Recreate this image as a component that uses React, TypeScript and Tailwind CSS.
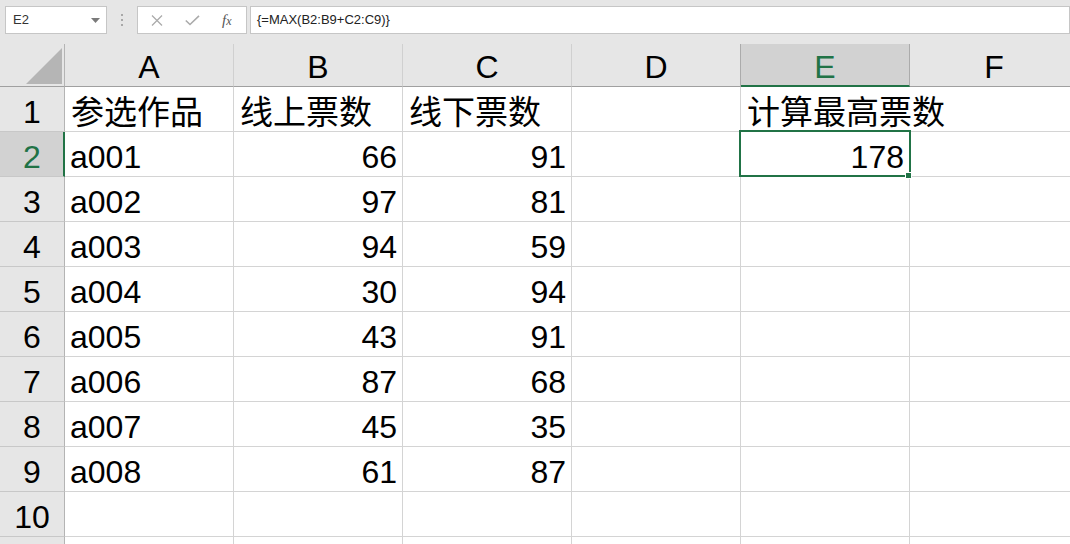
import React from 'react';

const cols = ['A', 'B', 'C', 'D', 'E', 'F'];

const votes: [string, number, number][] = [
  ['a001', 66, 91],
  ['a002', 97, 81],
  ['a003', 94, 59],
  ['a004', 30, 94],
  ['a005', 43, 91],
  ['a006', 87, 68],
  ['a007', 45, 35],
  ['a008', 61, 87],
];

const font = { fontFamily: '"Liberation Sans", "Noto Sans CJK SC", sans-serif' };

const Cell: React.FC<{ right?: boolean; noRightLine?: boolean; children?: React.ReactNode }> = ({
  right,
  noRightLine,
  children,
}) => (
  <div
    className={
      'w-[169px] h-[45px] shrink-0 border-b px-[5px] leading-[51px] whitespace-nowrap text-[32px] text-black ' +
      (noRightLine ? 'border-r border-b-[#d4d4d4] border-r-white ' : 'border-r border-[#d4d4d4] ') +
      (right ? 'text-right' : 'text-left')
    }
  >
    {children}
  </div>
);

const Cjk: React.FC<{ children: React.ReactNode }> = ({ children }) => (
  <span className="text-[33px] pl-[1px]">{children}</span>
);

function FormulaBar() {
  return (
    <div className="h-[44px] bg-[#e6e6e6] flex items-start pt-[6px]">
      <div className="ml-[5px] w-[102px] h-[28px] shrink-0 bg-white border border-[#c6c6c6] flex items-center justify-between pl-[7px] pr-[6px]">
        <span className="text-[13px] text-[#333]">E2</span>
        <svg width="9" height="5" viewBox="0 0 9 5">
          <path d="M0 0 L9 0 L4.5 5 Z" fill="#7a7a7a" />
        </svg>
      </div>
      <div className="w-[30px] h-[28px] shrink-0 flex flex-col items-center justify-center gap-[3px] pr-[1px]">
        <div className="w-[2px] h-[2px] bg-[#a8a8a8]" />
        <div className="w-[2px] h-[2px] bg-[#a8a8a8]" />
        <div className="w-[2px] h-[2px] bg-[#a8a8a8]" />
      </div>
      <div className="w-[110px] h-[28px] shrink-0 bg-white border border-[#c6c6c6] flex items-center pl-[13px]">
        <svg width="12" height="11" viewBox="0 0 12 11">
          <path d="M1 0.5 L11 10.5 M11 0.5 L1 10.5" stroke="#ababab" strokeWidth="1.3" />
        </svg>
        <svg width="15" height="11" viewBox="0 0 15 11" className="ml-[22px]">
          <path d="M0.8 5.5 L5 9.5 L14 0.8" stroke="#ababab" strokeWidth="1.6" fill="none" />
        </svg>
        <span
          className="ml-[22px] text-[15px] italic text-[#555] leading-none"
          style={{ fontFamily: '"Liberation Serif", serif' }}
        >
          f<span className="text-[12px]">x</span>
        </span>
      </div>
      <div className="ml-[3px] flex-1 h-[28px] bg-white border border-[#c6c6c6] flex items-center pl-[6px]">
        <span className="text-[13px] text-[#222]">{'{=MAX(B2:B9+C2:C9)}'}</span>
      </div>
    </div>
  );
}

function ColumnHeaders() {
  return (
    <div className="flex h-[43px]">
      <div className="w-[65px] h-[43px] shrink-0 border-r border-b border-r-[#b4b4b4] border-b-[#a0a0a0] bg-[#e6e6e6] flex items-end justify-end pr-[2px] pb-[2px]">
        <svg width="36" height="36" viewBox="0 0 36 36">
          <path d="M0 36 L36 36 L36 0 Z" fill="#b5b5b5" />
        </svg>
      </div>
      {cols.map((c) => {
        const sel = c === 'E';
        const darkRight = c === 'D' || c === 'E';
        return (
          <div
            key={c}
            className={
              'w-[169px] h-[43px] shrink-0 border-r text-center text-[32px] leading-[47px] ' +
              (darkRight ? 'border-r-[#ababab] ' : 'border-r-[#d0d0d0] ') +
              (sel
                ? 'bg-[#d2d2d2] border-b-2 border-b-[#217346] text-[#217346]'
                : 'bg-[#e6e6e6] border-b border-b-[#a0a0a0] text-black')
            }
          >
            {c}
          </div>
        );
      })}
    </div>
  );
}

function RowHeader({ n }: { n?: number }) {
  const sel = n === 2;
  return (
    <div
      className={
        'w-[65px] h-[45px] shrink-0 border-b border-b-[#c8c8c8] text-center text-[32px] leading-[51px] ' +
        (sel
          ? 'bg-[#d2d2d2] border-r-2 border-r-[#217346] text-[#217346] pl-[1px]'
          : 'bg-[#e6e6e6] border-r border-r-[#b4b4b4] text-black')
      }
    >
      {n}
    </div>
  );
}

export default function App() {
  return (
    <div className="w-[1070px] h-[544px] overflow-hidden bg-white" style={font}>
      <FormulaBar />
      <div className="relative w-[1070px] overflow-hidden">
        <div className="w-[1200px]">
          <ColumnHeaders />
          <div className="flex">
            <RowHeader n={1} />
            <Cell>
              <Cjk>参选作品</Cjk>
            </Cell>
            <Cell>
              <Cjk>线上票数</Cjk>
            </Cell>
            <Cell>
              <Cjk>线下票数</Cjk>
            </Cell>
            <Cell />
            <Cell noRightLine>
              <Cjk>计算最高票数</Cjk>
            </Cell>
            <Cell />
          </div>
          {votes.map(([name, online, offline], i) => (
            <div className="flex" key={name}>
              <RowHeader n={i + 2} />
              <Cell>{name}</Cell>
              <Cell right>{online}</Cell>
              <Cell right>{offline}</Cell>
              <Cell />
              <Cell right>{i === 0 ? 178 : ''}</Cell>
              <Cell />
            </div>
          ))}
          <div className="flex">
            <RowHeader n={10} />
            <Cell />
            <Cell />
            <Cell />
            <Cell />
            <Cell />
            <Cell />
          </div>
          {/* row 11, only a sliver is in view */}
          <div className="flex">
            <RowHeader />
            <Cell />
            <Cell />
            <Cell />
            <Cell />
            <Cell />
            <Cell />
          </div>
        </div>
        {/* active cell E2 */}
        <div className="absolute left-[739px] top-[86px] w-[172px] h-[47px] border-2 border-[#217346]" />
        <div className="absolute left-[905px] top-[128px] w-[7px] h-[7px] bg-[#217346] border border-white" />
      </div>
    </div>
  );
}
